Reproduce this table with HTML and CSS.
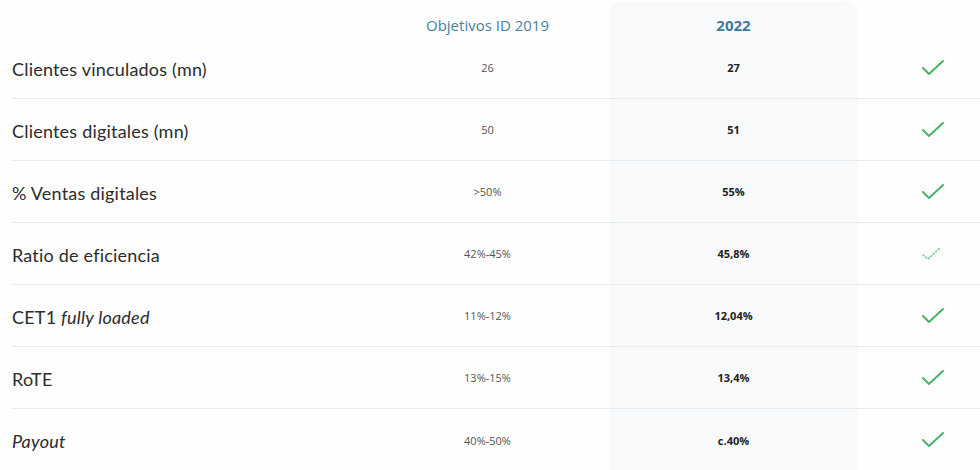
FILE: index.html
```html
<!DOCTYPE html>
<html lang="es">
<head>
<meta charset="utf-8">
<title>Objetivos ID 2019</title>
<link rel="stylesheet" href="styles.css">
</head>
<body>
<div class="table">
  <div class="row head">
    <div class="cell label"></div>
    <div class="cell target">Objetivos ID 2019</div>
    <div class="cell actual">2022</div>
    <div class="cell status"></div>
  </div>
  <div class="row">
    <div class="cell label"><span>Clientes vinculados (mn)</span></div>
    <div class="cell target">26</div>
    <div class="cell actual">27</div>
    <div class="cell status"><svg class="check" viewBox="0 0 24 16"><polyline points="2,8 8,14 22,1"/></svg></div>
  </div>
  <div class="row">
    <div class="cell label"><span>Clientes digitales (mn)</span></div>
    <div class="cell target">50</div>
    <div class="cell actual">51</div>
    <div class="cell status"><svg class="check" viewBox="0 0 24 16"><polyline points="2,8 8,14 22,1"/></svg></div>
  </div>
  <div class="row">
    <div class="cell label"><span>% Ventas digitales</span></div>
    <div class="cell target">&gt;50%</div>
    <div class="cell actual">55%</div>
    <div class="cell status"><svg class="check" viewBox="0 0 24 16"><polyline points="2,8 8,14 22,1"/></svg></div>
  </div>
  <div class="row">
    <div class="cell label"><span>Ratio de eficiencia</span></div>
    <div class="cell target">42%-45%</div>
    <div class="cell actual">45,8%</div>
    <div class="cell status"><svg class="check partial" viewBox="0 0 24 16"><polyline points="2,9 7,13 19,2"/></svg></div>
  </div>
  <div class="row">
    <div class="cell label"><span>CET1 <em>fully loaded</em></span></div>
    <div class="cell target">11%-12%</div>
    <div class="cell actual">12,04%</div>
    <div class="cell status"><svg class="check" viewBox="0 0 24 16"><polyline points="2,8 8,14 22,1"/></svg></div>
  </div>
  <div class="row">
    <div class="cell label"><span>RoTE</span></div>
    <div class="cell target">13%-15%</div>
    <div class="cell actual">13,4%</div>
    <div class="cell status"><svg class="check" viewBox="0 0 24 16"><polyline points="2,8 8,14 22,1"/></svg></div>
  </div>
  <div class="row last">
    <div class="cell label"><span><em>Payout</em></span></div>
    <div class="cell target">40%-50%</div>
    <div class="cell actual">c.40%</div>
    <div class="cell status"><svg class="check" viewBox="0 0 24 16"><polyline points="2,8 8,14 22,1"/></svg></div>
  </div>
</div>
</body>
</html>
```

FILE: styles.css
```css
html, body {
  margin: 0;
  padding: 0;
  background: #fefefe;
  overflow: hidden;
}
body {
  width: 980px;
  height: 470px;
}
.table {
  padding: 1px 0 0 12px;
  width: 1010px;
}
.row {
  display: grid;
  grid-template-columns: 353px 245px 247px 1fr;
  height: 61px;
  border-bottom: 1px solid #e6ebf0;
}
.row.head {
  height: 36px;
  border-bottom: none;
}
.row.last {
  height: 70px;
  border-bottom: none;
}
.cell {
  display: flex;
  align-items: center;
}
.label {
  font-family: Lato, "Liberation Sans", sans-serif;
  font-size: 18px;
  color: #2c2c2c;
  letter-spacing: 0.2px;
  padding-top: 2px;
}
.label em {
  font-style: italic;
}
.target, .actual {
  justify-content: center;
  font-family: "Open Sans", "Liberation Sans", sans-serif;
  font-size: 11px;
  color: #555;
}
.actual {
  background: #f8f9fa;
  font-weight: 700;
  color: #222;
}
.head .target, .head .actual {
  font-size: 15px;
  color: #4a80a2;
  padding-top: 12px;
}
.head .actual {
  border-radius: 12px 12px 0 0;
  font-weight: 700;
  color: #3e7aa0;
}
.row.last .cell {
  padding-bottom: 8px;
}
.status {
  padding-left: 64px;
}
.check {
  width: 24px;
  height: 16px;
  fill: none;
  stroke: #45b066;
  stroke-width: 1.9;
  stroke-linecap: round;
  stroke-linejoin: round;
}
.check.partial {
  stroke: #6cc487;
  stroke-dasharray: 1 2.4;
  stroke-width: 1.5;
}
```
